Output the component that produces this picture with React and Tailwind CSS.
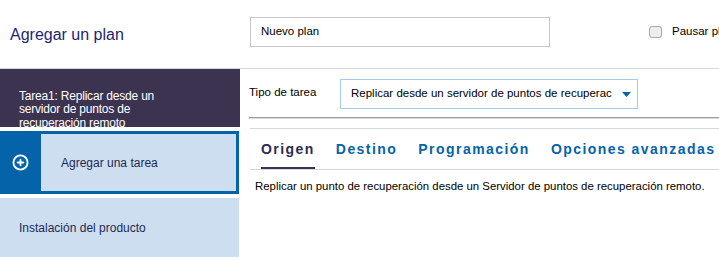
import { CirclePlus } from "lucide-react";

const tabs = ["Origen", "Destino", "Programación", "Opciones avanzadas"];

export default function App() {
  return (
    <div className="w-[719px] h-[261px] overflow-hidden bg-white font-['Liberation_Sans',Arial,sans-serif]">
      {/* header */}
      <div className="flex h-[69px] border-b border-[#cfd8e3]">
        <div className="w-[240px] shrink-0 flex items-center pl-[10px] pt-[1px] text-[16px] text-[#1b2675]">
          Agregar un plan
        </div>
        <div className="flex items-center flex-1 min-w-0 pl-[10px] pb-[4px] overflow-hidden">
          <div className="w-[300px] h-[30px] border border-[#c8c8c8] flex items-center pl-[10px] text-[11.5px] text-black shrink-0">
            Nuevo plan
          </div>
          <div className="ml-[99px] flex items-center whitespace-nowrap shrink-0">
            <span className="w-[13px] h-[12px] rounded-[3px] border border-[#a9a9a9] bg-[#ededed] mt-[-1px]" />
            <span className="ml-[10px] text-[11.5px] text-black">Pausar plan</span>
          </div>
        </div>
      </div>

      <div className="flex">
        {/* sidebar */}
        <div className="w-[240px] shrink-0">
          <div className="h-[58px] bg-[#3b3350] overflow-hidden pl-[19px] pr-[48px] pt-[21px] text-white text-[12px] leading-[13.3px] tracking-[-0.2px]">
            Tarea1: Replicar desde un servidor de puntos de recuperación remoto
          </div>
          <div className="mt-[4px] h-[63px] flex border-[3px] border-[#0563a9] border-l-0 w-[239px]">
            <div className="w-[41px] bg-[#0563a9] flex items-center justify-center pr-[1px]">
              <CirclePlus size={17} strokeWidth={2.6} color="#ffffff" />
            </div>
            <div className="flex-1 bg-[#cddef0] flex items-center pl-[20px] text-[12px] text-[#1c2a55]">
              Agregar una tarea
            </div>
          </div>
          <div className="mt-[4px] h-[59px] w-[239px] bg-[#cddef0] flex items-center pl-[19px] text-[12px] text-[#1c2a55]">
            Instalación del producto
          </div>
        </div>

        {/* main */}
        <div className="flex-1 pl-[9px]">
          <div className="flex items-center pt-[10px]">
            <div className="w-[91px] text-[11.5px] text-black pb-[2px]">Tipo de tarea</div>
            <div className="w-[298px] h-[30px] border border-[#a9c9e9] flex items-center justify-between pl-[10px] pr-[5px] text-[11.5px] text-black">
              <span className="whitespace-nowrap overflow-hidden">Replicar desde un servidor de puntos de recuperac</span>
              <svg width="9" height="5" viewBox="0 0 9 5" className="shrink-0 mr-[1px]">
                <polygon points="0,0 9,0 4.5,5" fill="#0563a9" />
              </svg>
            </div>
          </div>
          <div className="mt-[8px] border-t border-[#9e9e9e] h-[1px] border-b border-b-[#dcdcdc]" />
          <div className="ml-[1px] mt-[9px] border-t border-b border-[#cfd8e3] h-[42px] flex items-stretch pl-[11px] gap-[21px] font-bold text-[14px] tracking-[1.45px]">
            {tabs.map((t, i) => (
              <div
                key={t}
                className={
                  i === 0
                    ? "flex items-center border-b-2 border-[#3b3350] text-[#2e2b4f] pt-[3px] whitespace-nowrap"
                    : "flex items-center border-b-2 border-transparent text-[#0563a9] pt-[3px] whitespace-nowrap"
                }
              >
                {t}
              </div>
            ))}
          </div>
          <div className="pl-[6px] pt-[8px] text-[11.4px] text-black whitespace-nowrap">
            Replicar un punto de recuperación desde un Servidor de puntos de recuperación remoto.
          </div>
        </div>
      </div>
    </div>
  );
}
